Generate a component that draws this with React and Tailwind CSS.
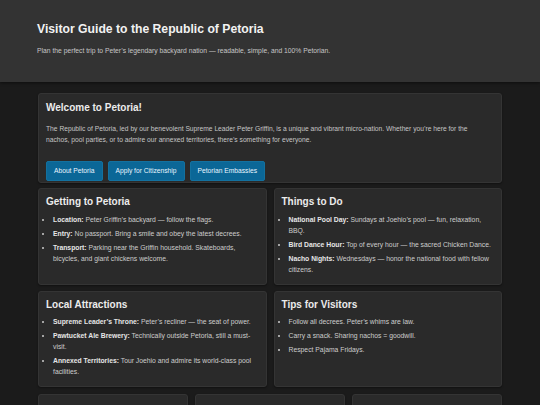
const sections = [
  {
    title: 'Getting to Petoria',
    items: [
      ['Location:', 'Peter Griffin’s backyard — follow the flags.'],
      ['Entry:', 'No passport. Bring a smile and obey the latest decrees.'],
      ['Transport:', 'Parking near the Griffin household. Skateboards, bicycles, and giant chickens welcome.'],
    ],
  },
  {
    title: 'Things to Do',
    items: [
      ['National Pool Day:', 'Sundays at Joehio’s pool — fun, relaxation, BBQ.'],
      ['Bird Dance Hour:', 'Top of every hour — the sacred Chicken Dance.'],
      ['Nacho Nights:', 'Wednesdays — honor the national food with fellow citizens.'],
    ],
  },
  {
    title: 'Local Attractions',
    items: [
      ['Supreme Leader’s Throne:', 'Peter’s recliner — the seat of power.'],
      ['Pawtucket Ale Brewery:', 'Technically outside Petoria, still a must-visit.'],
      ['Annexed Territories:', 'Tour Joehio and admire its world-class pool facilities.'],
    ],
  },
  {
    title: 'Tips for Visitors',
    items: [
      [null, 'Follow all decrees. Peter’s whims are law.'],
      [null, 'Carry a snack. Sharing nachos = goodwill.'],
      [null, 'Respect Pajama Fridays.'],
    ],
  },
];

const extras = ['National Cuisine', 'Annual Events', 'Contact the Embassy'];

function Card({ children, className = '' }) {
  return (
    <section
      className={`rounded-[3px] border border-[#343434] bg-[#2a2a2a] px-[7px] shadow-[0_1px_2px_rgba(0,0,0,0.4)] ${className}`}
    >
      {children}
    </section>
  );
}

function InfoCard({ title, items }) {
  return (
    <Card className="pt-[7px] pb-[9px]">
      <h3 className="text-[10px] font-bold leading-[12px] text-[#ececec]">{title}</h3>
      <ul className="mt-[5.5px] flex list-disc flex-col gap-[3px] pl-[7px] pr-[2px] text-[6.8px] leading-[11px] text-[#cdcdcd]">
        {items.map(([label, text], i) => (
          <li key={i}>
            {label && <strong className="font-bold text-[#e6e6e6]">{label}</strong>}
            {label ? ' ' : ''}
            {text}
          </li>
        ))}
      </ul>
    </Card>
  );
}

export default function App() {
  return (
    <div className="min-h-screen bg-[#1b1b1b] font-['Liberation_Sans',Arial,sans-serif]">
      <header className="h-[82px] bg-[#333333] px-[37px] pt-[22px] shadow-[0_1px_3px_rgba(0,0,0,0.5)]">
        <h1 className="text-[12.2px] font-bold leading-[14px] text-[#f2f2f2]">
          Visitor Guide to the Republic of Petoria
        </h1>
        <p className="mt-[10px] text-[6.75px] leading-[10px] text-[#c6c6c6]">
          Plan the perfect trip to Peter’s legendary backyard nation — readable, simple, and 100% Petorian.
        </p>
      </header>

      <main className="px-[38px] pt-[11px]">
        <Card className="mb-[5px] pt-[8px] pb-[1.5px]">
          <h2 className="text-[10px] font-bold leading-[12px] text-[#ececec]">Welcome to Petoria!</h2>
          <p className="mt-[9px] pr-[2px] text-[6.7px] leading-[11px] text-[#c6c6c6]">
            The Republic of Petoria, led by our benevolent Supreme Leader Peter Griffin, is a unique and vibrant
            micro-nation. Whether you’re here for the nachos, pool parties, or to admire our annexed territories,
            there’s something for everyone.
          </p>
          <div className="mt-[16px] flex gap-[5px]">
            {['About Petoria', 'Apply for Citizenship', 'Petorian Embassies'].map((b) => (
              <button
                key={b}
                type="button"
                className="h-[19.5px] rounded-[2px] border border-[#13719f] bg-[#0b6797] px-[7px] text-[6.7px] text-[#eaf5ff]"
              >
                {b}
              </button>
            ))}
          </div>
        </Card>

        <div className="grid grid-cols-2 gap-[6px_7px]">
          {sections.map((s) => (
            <InfoCard key={s.title} {...s} />
          ))}
        </div>

        <div className="mt-[7px] grid grid-cols-3 gap-[7px]">
          {extras.map((t) => (
            <Card key={t} className="pt-[12px] pb-[9px]">
              <h3 className="text-[10px] font-bold leading-[12px] text-[#ececec]">{t}</h3>
              <p className="mt-[5.5px] text-[6.8px] leading-[11px] text-[#cdcdcd]">
                More Petorian details coming soon.
              </p>
            </Card>
          ))}
        </div>
      </main>
    </div>
  );
}
